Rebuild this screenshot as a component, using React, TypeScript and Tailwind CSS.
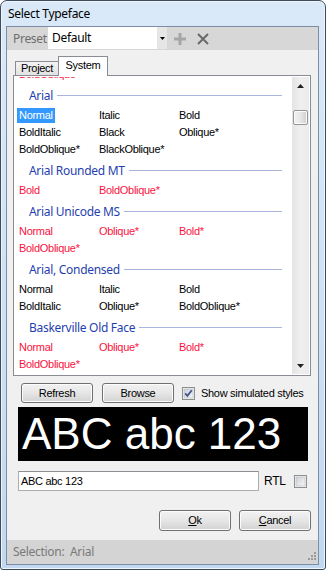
import React from "react";

const ui = "font-['Noto_Sans',sans-serif] tracking-[-0.3px]";
const ms = "font-['Liberation_Sans',Arial,sans-serif] tracking-[-0.3px]";

type Group = { name: string; red: boolean; items: string[] };

const groups: Group[] = [
  { name: "Arial", red: false, items: ["Normal", "Italic", "Bold", "BoldItalic", "Black", "Oblique*", "BoldOblique*", "BlackOblique*"] },
  { name: "Arial Rounded MT", red: true, items: ["Bold", "BoldOblique*"] },
  { name: "Arial Unicode MS", red: true, items: ["Normal", "Oblique*", "Bold*", "BoldOblique*"] },
  { name: "Arial, Condensed", red: false, items: ["Normal", "Italic", "Bold", "BoldItalic", "Oblique*", "BoldOblique*"] },
  { name: "Baskerville Old Face", red: true, items: ["Normal", "Oblique*", "Bold*", "BoldOblique*"] },
];

function Item({ text, red, selected }: { text: string; red: boolean; selected?: boolean }) {
  return (
    <div className="h-[17px] flex items-center">
      <span
        className={
          "h-[15px] leading-[15px] px-[2px] text-[11px] whitespace-nowrap " +
          ms +
          " " +
          (selected ? "bg-[#3399ff] text-white" : red ? "text-[#fa1240]" : "text-black")
        }
      >
        {text}
      </span>
    </div>
  );
}

function Button({ children, className = "" }: { children: React.ReactNode; className?: string }) {
  return (
    <div
      className={
        "flex items-center justify-center rounded-[3px] border border-[#707070] bg-gradient-to-b from-[#f2f2f2] via-[#e6e6e6] to-[#d2d2d2] text-[11px] text-black shadow-[inset_0_0_0_1px_#fcfcfc] " +
        ms +
        " " +
        className
      }
    >
      {children}
    </div>
  );
}

function CheckBox({ checked }: { checked: boolean }) {
  return (
    <svg width="13" height="13" viewBox="0 0 13 13" className="shrink-0">
      <defs>
        <linearGradient id={checked ? "cbg1" : "cbg2"} x1="0" y1="0" x2="1" y2="1">
          <stop offset="0" stopColor="#cbcfd5" />
          <stop offset="1" stopColor="#f6f6f6" />
        </linearGradient>
      </defs>
      <rect x="0.5" y="0.5" width="12" height="12" fill="#f4f4f4" stroke="#8e8f8f" />
      <rect x="2" y="2" width="9" height="9" fill={`url(#${checked ? "cbg1" : "cbg2"})`} stroke="#b8bcc2" strokeWidth="0.6" />
      {checked && (
        <path d="M3.2 6.4 L5.4 8.8 L9.8 3.2" fill="none" stroke="#3f5690" strokeWidth="1.8" />
      )}
    </svg>
  );
}

export default function App() {
  return (
    <div className="w-[326px] h-[570px] bg-white overflow-hidden">
      <div className="w-[326px] h-[570px] rounded-t-[7px] rounded-b-[3px] border border-[#3c4a5c] bg-gradient-to-b from-[#dae9f8] via-[#cfe2f5] to-[#c2d8f0] pl-[5px] pr-[6px] pb-[4px] flex flex-col shadow-[inset_0_0_0_1px_#eef5fc]">
        <div className={"h-[25px] flex items-center pl-[2px] text-[12px] text-black " + ui}>Select Typeface</div>
        <div className="flex-1 flex flex-col border border-[#7c8ea3] bg-[#f0f0f0] min-h-0">
          {/* Preset bar */}
          <div className="h-[23px] bg-[#d7d7d7] flex items-start shrink-0">
            <div className={"w-[41px] h-[23px] flex items-center pl-[6px] text-[12px] text-[#6d6d6d] " + ui}>Preset</div>
            <div className="w-[119px] h-[22px] bg-white flex">
              <div className={"flex-1 flex items-center pl-[4px] text-[12px] text-black " + ui}>Default</div>
              <div className="w-[10px] h-full bg-[#e6e6e6] flex items-center justify-center">
                <svg width="5" height="3" viewBox="0 0 5 3">
                  <path d="M0 0 H5 L2.5 3 Z" fill="#000" />
                </svg>
              </div>
            </div>
            <div className="h-[23px] flex items-center ml-[7px]">
              <svg width="12" height="12" viewBox="0 0 12 12">
                <path d="M4.5 0 H7.5 V4.5 H12 V7.5 H7.5 V12 H4.5 V7.5 H0 V4.5 H4.5 Z" fill="#a6a6a6" />
              </svg>
            </div>
            <div className="h-[23px] flex items-center ml-[11px]">
              <svg width="12" height="12" viewBox="0 0 12 12">
                <path d="M1 1 L11 11 M11 1 L1 11" stroke="#6a6a6a" strokeWidth="2" />
              </svg>
            </div>
          </div>

          {/* Main */}
          <div className="flex-1 flex flex-col pl-[6px] pr-[7px] pb-[9px] min-h-0">
            {/* tabs */}
            <div className="h-[26px] flex items-end relative z-10 shrink-0">
              <div className={"ml-[2px] mb-[1px] w-[44px] h-[14px] border border-b-0 border-[#898c95] bg-gradient-to-b from-[#f4f4f4] to-[#e2e2e2] flex items-center justify-center text-[11px] text-black leading-none " + ms}>
                Project
              </div>
              <div className={"-ml-[1px] w-[50px] h-[20px] border border-b-0 border-[#898c95] bg-white flex items-start pt-[3px] justify-center text-[11px] text-black leading-none " + ms}>
                System
              </div>
            </div>
            {/* panel */}
            <div className="-mt-[1px] h-[301px] shrink-0 border border-[#898c95] bg-white p-px flex">
              <div className="flex-1 overflow-hidden">
                <div className="-mt-[11px]">
                  <div className="grid grid-cols-[80px_80px_80px] pl-[2px] mb-px">
                    <Item text="BoldOblique*" red />
                  </div>
                  {groups.map((g) => (
                    <div key={g.name} className="mb-px">
                      <div className="h-[23px] flex items-center pl-[14px] pr-[10px]">
                        <span className={"text-[12px] text-[#1f3fae] whitespace-nowrap " + ui}>{g.name}</span>
                        <div className="flex-1 h-px bg-[#a9b5da] ml-[4px]" />
                      </div>
                      <div className="grid grid-cols-[80px_80px_80px] pl-[2px]">
                        {g.items.map((it, i) => (
                          <Item key={i} text={it} red={g.red} selected={g.name === "Arial" && i === 0} />
                        ))}
                      </div>
                    </div>
                  ))}
                </div>
              </div>
              {/* scrollbar */}
              <div className="w-[17px] flex flex-col bg-gradient-to-r from-[#e4e4e4] via-[#efefef] to-[#ebebeb]">
                <div className="h-[17px] flex items-center justify-center">
                  <svg width="7" height="4" viewBox="0 0 7 4">
                    <path d="M0 4 L3.5 0 L7 4 Z" fill="#222" />
                  </svg>
                </div>
                <div className="flex-1">
                  <div className="mt-[16px] ml-px w-[15px] h-[15px] rounded-[2px] border border-[#969696] bg-gradient-to-r from-[#f2f2f2] via-[#e6e6e6] to-[#cfcfcf] shadow-[inset_0_0_0_1px_#fafafa]" />
                </div>
                <div className="h-[17px] flex items-center justify-center">
                  <svg width="7" height="4" viewBox="0 0 7 4">
                    <path d="M0 0 L7 0 L3.5 4 Z" fill="#222" />
                  </svg>
                </div>
              </div>
            </div>

            {/* buttons */}
            <div className="mt-[7px] h-[20px] flex items-center shrink-0">
              <Button className="ml-[8px] w-[72px] h-[20px]">Refresh</Button>
              <Button className="ml-[9px] w-[72px] h-[20px]">Browse</Button>
              <div className="ml-[8px]">
                <CheckBox checked />
              </div>
              <span className={"ml-[6px] text-[11px] text-black whitespace-nowrap " + ms}>Show simulated styles</span>
            </div>

            {/* preview */}
            <div className="mt-[4px] ml-[5px] mr-[3px] h-[54px] bg-black shrink-0 overflow-hidden">
              <div className="pl-[4px] text-[44px] leading-[54px] text-white font-['Liberation_Sans',Arial,sans-serif] whitespace-nowrap">
                ABC abc 123
              </div>
            </div>

            {/* input */}
            <div className="mt-[10px] h-[20px] flex items-center shrink-0">
              <div className={"ml-[5px] w-[241px] h-[20px] bg-white border border-[#abadb3] border-t-[#8e9095] flex items-center pl-[2px] text-[11px] text-black " + ms}>
                ABC abc 123
              </div>
              <span className={"ml-[5px] w-[30px] text-[12px] text-black " + ms}>RTL</span>
              <CheckBox checked={false} />
            </div>

            {/* ok cancel */}
            <div className="mt-[19px] h-[21px] flex justify-end shrink-0">
              <Button className="w-[72px] h-[21px]">
                <span className="underline">O</span>k
              </Button>
              <Button className="ml-[8px] w-[72px] h-[21px]">
                <span className="underline">C</span>ancel
              </Button>
            </div>
          </div>

          {/* status bar */}
          <div className="h-[24px] shrink-0 bg-[#d4d4d4] flex items-center justify-between pl-[6px] pr-[2px]">
            <span className={"text-[12px] text-[#7a7a7a] whitespace-pre " + ui}>Selection:  Arial</span>
            <svg width="10" height="10" viewBox="0 0 10 10" className="self-end mb-[2px]">
              <g fill="#9a9a9a">
                <rect x="8" y="0" width="2" height="2" />
                <rect x="5" y="3" width="2" height="2" />
                <rect x="8" y="3" width="2" height="2" />
                <rect x="2" y="6" width="2" height="2" />
                <rect x="5" y="6" width="2" height="2" />
                <rect x="8" y="6" width="2" height="2" />
              </g>
            </svg>
          </div>
        </div>
      </div>
    </div>
  );
}
